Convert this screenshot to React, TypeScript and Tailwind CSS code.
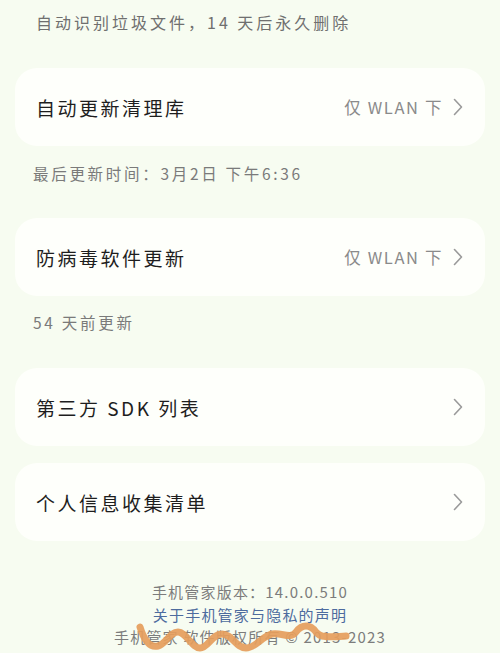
const CJK = { fontFamily: '"Noto Sans CJK SC", "Noto Sans", sans-serif' };

function Chevron() {
  return (
    <svg width="10" height="18" viewBox="0 0 10 18" fill="none" className="ml-[10px] shrink-0">
      <path d="M1.5 1.5 L8.5 9 L1.5 16.5" stroke="#9a9a9a" strokeWidth="1.6" strokeLinecap="round" strokeLinejoin="round" />
    </svg>
  );
}

function Row({ title, value, className }: { title: string; value?: string; className?: string }) {
  return (
    <div className={`h-[78px] rounded-[22px] bg-[#fefffb] flex items-center pl-[21px] pr-[22px] ${className ?? ''}`}>
      <span className="flex-1 text-[19px] tracking-[2.5px] text-[#1e1e1e] leading-none">{title}</span>
      {value && <span className="text-[16.5px] tracking-[1.6px] text-[#8a8a8a] leading-none whitespace-pre">{value}</span>}
      <Chevron />
    </div>
  );
}

export default function App() {
  return (
    <div className="w-[500px] h-[653px] overflow-hidden bg-[#f7fcf1] relative" style={CJK}>
      <div className="px-[15px]">
        <div className="mt-[10px] h-[24px] leading-[24px] pl-[21px] text-[16px] tracking-[3px] text-[#6f6f6f]">
          自动识别垃圾文件，14 天后永久删除
        </div>
        <Row className="mt-[34px]" title="自动更新清理库" value="仅 WLAN 下" />
        <div className="mt-[15px] h-[24px] leading-[24px] pl-[18px] text-[15.5px] tracking-[2.7px] text-[#7a7a7a]">
          最后更新时间：3月2日 下午6:36
        </div>
        <Row className="mt-[33px]" title="防病毒软件更新" value="仅 WLAN 下" />
        <div className="mt-[14px] h-[24px] leading-[24px] pl-[18px] text-[15.5px] tracking-[2.7px] text-[#7a7a7a]">
          54 天前更新
        </div>
        <Row className="mt-[34px]" title="第三方 SDK 列表" />
        <Row className="mt-[17px]" title="个人信息收集清单" />
        <div className="mt-[40px] flex flex-col items-center text-[15px] tracking-[1.2px] leading-[22px]">
          <div className="text-[#7c7c7c]">手机管家版本：14.0.0.510</div>
          <div className="text-[#4d6b9e] mt-[1px]">关于手机管家与隐私的声明</div>
          <div className="text-[#7c7c7c]">手机管家 软件版权所有 © 2013-2023</div>
        </div>
      </div>
      <svg className="absolute left-0 top-0 pointer-events-none" width="500" height="653" viewBox="0 0 500 653" fill="none">
        <path
          d="M140 627 C144 640,150 648,158 646 C166 644,170 632,178 632 C186 632,192 648,200 648 C208 648,212 634,222 634 C232 634,236 648,246 648 C256 648,262 636,272 634 C282 632,290 640,296 632 C302 624,310 624,316 632 C320 638,330 637,346 636"
          stroke="#e59d5c"
          strokeOpacity="0.92"
          strokeWidth="7"
          strokeLinecap="round"
          strokeLinejoin="round"
        />
      </svg>
    </div>
  );
}
